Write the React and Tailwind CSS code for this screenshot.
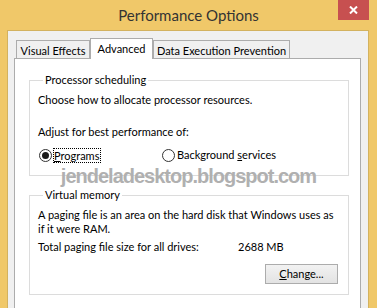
const Radio = ({ checked }) => (
  <span className="flex h-[13px] w-[13px] shrink-0 items-center justify-center rounded-full border border-[#333333] bg-white">
    {checked && <span className="h-[7px] w-[7px] rounded-full bg-[#1a1a1a]"></span>}
  </span>
);

const App = () => {
  return (
    <div className="relative h-[308px] w-[377px] overflow-hidden bg-[#f0c869] font-['Lato',sans-serif] text-[11px] text-black">
      {/* title bar */}
      <div className="relative flex h-[30px] items-center justify-center">
        <span className="text-[15px] leading-[20px] text-[#333333]">Performance Options</span>
        <button className="absolute right-[8px] top-0 flex h-[20px] w-[31px] items-center justify-center bg-[#c75050]">
          <svg width="9" height="8" viewBox="0 0 9 8">
            <path d="M1 0.5 L8 7.5 M8 0.5 L1 7.5" stroke="white" strokeWidth="2" />
          </svg>
        </button>
      </div>

      {/* window body */}
      <div className="ml-[7px] mr-[8px] h-[278px] border border-b-0 border-[#d3b25f] bg-[#f0f0f0]">
        <div className="relative z-10 ml-[8px] mt-[7px] -mb-px flex h-[21px] items-end">
          <div className="mb-px flex h-[18px] w-[74px] items-center justify-center whitespace-nowrap border border-b-0 border-[#acacac] bg-[#f0f0f0] pt-[2px] leading-[16px]">
            Visual Effects
          </div>
          <div className="flex h-[21px] w-[63px] items-center justify-center whitespace-nowrap border border-b-0 border-[#acacac] bg-white leading-[16px]">
            Advanced
          </div>
          <div className="mb-px flex h-[18px] w-[137px] items-center justify-center whitespace-nowrap border border-b-0 border-[#acacac] bg-[#f0f0f0] pt-[2px] leading-[16px]">
            Data Execution Prevention
          </div>
        </div>

        <div className="ml-[6px] h-[260px] w-[347px] border border-[#acacac] bg-white">
          <fieldset className="ml-[14px] mt-[13px] w-[320px] min-w-0 border border-[#dcdcdc] px-[8px] pb-[12px]">
            <legend className="ml-[5px] px-[2px] leading-[16px]">Processor scheduling</legend>
            <p className="mt-[4px] leading-[16px]">Choose how to allocate processor resources.</p>
            <p className="mt-[16px] leading-[16px]">Adjust for best performance of:</p>
            <div className="mt-[7px] flex h-[16px] items-center">
              <div className="flex w-[124px] items-center pl-px">
                <Radio checked />
                <span className="ml-px border border-dotted border-black pr-px leading-[13px]">
                  <span className="underline">P</span>rograms
                </span>
              </div>
              <div className="flex items-center">
                <Radio />
                <span className="ml-[2px] leading-[16px]">
                  Background <span className="underline">s</span>ervices
                </span>
              </div>
            </div>
          </fieldset>

          <fieldset className="ml-[14px] mt-[11px] w-[320px] min-w-0 border border-[#dcdcdc] px-[8px] pb-[10px]">
            <legend className="ml-[5px] px-[2px] leading-[16px]">Virtual memory</legend>
            <p className="mt-[5px] whitespace-nowrap leading-[14px]">
              A paging file is an area on the hard disk that Windows uses as
              <br />
              if it were RAM.
            </p>
            <div className="mt-[3px] flex whitespace-nowrap leading-[16px]">
              <span className="w-[200px]">Total paging file size for all drives:</span>
              <span>2688 MB</span>
            </div>
            <div className="mt-[9px] flex justify-end pr-[2px]">
              <button className="flex h-[20px] w-[73px] items-center justify-center border border-[#acacac] bg-gradient-to-b from-[#f2f2f2] to-[#e3e3e3] leading-[16px]">
                <span>
                  <span className="underline">C</span>hange...
                </span>
              </button>
            </div>
          </fieldset>
        </div>
      </div>

      {/* blog watermark */}
      <div className="pointer-events-none absolute left-0 right-0 top-[164px] text-center font-['Liberation_Sans',sans-serif] text-[20px] font-bold leading-[24px] tracking-[-1px] text-[#b0b0b0]">
        jendeladesktop.blogspot.com
      </div>
    </div>
  );
};

export default App;
